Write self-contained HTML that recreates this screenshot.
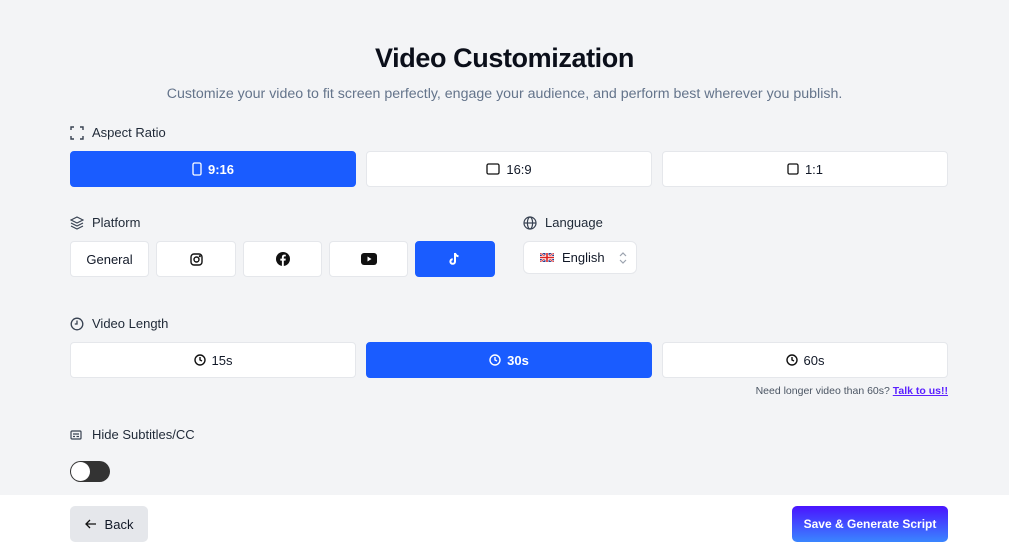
<!DOCTYPE html>
<html><head><style>
*{box-sizing:border-box;margin:0;padding:0}
body{width:1009px;height:549px;background:#f3f4f6;font-family:"Liberation Sans",sans-serif;position:relative;overflow:hidden;color:#111827}
.a{position:absolute}
h1{position:absolute;top:43px;width:100%;text-align:center;font-size:27px;font-weight:bold;color:#0b0f1a;letter-spacing:-0.4px}
.sub{top:86px;width:100%;text-align:center;font-size:14.2px;color:#64748b}
.lbl{font-size:13px;color:#1f2937;display:flex;align-items:center;gap:8px}
.btn{position:absolute;background:#fff;border:1px solid #e5e7eb;border-radius:4px;display:flex;align-items:center;justify-content:center;gap:6px;font-size:13px;color:#111827}
.on{background:#1a5cff;border-color:#1a5cff;color:#fff;font-weight:bold}
svg{display:block}
</style></head><body>
<h1>Video Customization</h1>
<div class="a sub">Customize your video to fit screen perfectly, engage your audience, and perform best wherever you publish.</div>

<div class="a lbl" style="left:70px;top:125px"><svg width="14" height="14" viewBox="0 0 14 14" fill="none" stroke="#374151" stroke-width="1.4"><path d="M1 4V1h3M10 1h3v3M13 10v3h-3M4 13H1v-3"/></svg>Aspect Ratio</div>
<div class="btn on" style="left:70px;top:151px;width:286px;height:36px"><svg width="10" height="14" viewBox="0 0 10 14" fill="none" stroke="#fff" stroke-width="1.3"><rect x="1" y="1" width="8" height="12" rx="1.5"/></svg>9:16</div>
<div class="btn" style="left:366px;top:151px;width:286px;height:36px"><svg width="14" height="12" viewBox="0 0 14 12" fill="none" stroke="#111" stroke-width="1.3"><rect x="1" y="1" width="12" height="10" rx="1.5"/></svg>16:9</div>
<div class="btn" style="left:662px;top:151px;width:286px;height:36px"><svg width="12" height="12" viewBox="0 0 12 12" fill="none" stroke="#111" stroke-width="1.3"><rect x="1" y="1" width="10" height="10" rx="1.5"/></svg>1:1</div>

<div class="a lbl" style="left:70px;top:215px"><svg width="14" height="14" viewBox="0 0 14 14" fill="none" stroke="#374151" stroke-width="1.2"><path d="M7 1L1 4l6 3 6-3zM1 7l6 3 6-3M1 10l6 3 6-3"/></svg>Platform</div>
<div class="btn" style="left:70px;top:241px;width:79px;height:36px">General</div>
<div class="btn" style="left:156px;top:241px;width:80px;height:36px"><svg width="13" height="13" viewBox="0 0 13 13" fill="none" stroke="#111" stroke-width="1.4"><rect x="1" y="1" width="11" height="11" rx="3"/><circle cx="6.5" cy="6.5" r="2.5"/><circle cx="9.8" cy="3.2" r=".4" fill="#111"/></svg></div>
<div class="btn" style="left:243px;top:241px;width:79px;height:36px"><svg width="14" height="14" viewBox="0 0 14 14"><circle cx="7" cy="7" r="7" fill="#111"/><path d="M7.8 14V8.6h1.7l.3-2H7.8V5.4c0-.6.2-1 1-1h1V2.7c-.3 0-.9-.1-1.5-.1-1.5 0-2.4.9-2.4 2.5v1.5H4.3v2h1.6V14z" fill="#fff"/></svg></div>
<div class="btn" style="left:329px;top:241px;width:79px;height:36px"><svg width="16" height="12" viewBox="0 0 16 12"><rect width="16" height="12" rx="3" fill="#111"/><path d="M6.5 3.5v5l4-2.5z" fill="#fff"/></svg></div>
<div class="btn on" style="left:415px;top:241px;width:80px;height:36px"><svg width="12" height="14" viewBox="0 0 12 14" fill="none" stroke="#fff" stroke-width="2"><path d="M6 1v8.5a2.3 2.3 0 1 1-2.3-2.3M6 1c.3 1.8 1.6 3 3.5 3.2"/></svg></div>

<div class="a lbl" style="left:523px;top:215px"><svg width="14" height="14" viewBox="0 0 14 14" fill="none" stroke="#374151" stroke-width="1.2"><circle cx="7" cy="7" r="6"/><ellipse cx="7" cy="7" rx="2.6" ry="6"/><path d="M1 7h12"/></svg>Language</div>
<div class="btn" style="left:523px;top:241px;width:114px;height:33px;border-radius:6px;justify-content:flex-start;padding-left:16px;gap:8px"><svg width="14" height="9" viewBox="0 0 14 9"><rect width="14" height="9" fill="#2a3d8f"/><path d="M0 0l14 9M14 0L0 9" stroke="#fff" stroke-width="2"/><path d="M0 0l14 9M14 0L0 9" stroke="#d22" stroke-width=".8"/><path d="M7 0v9M0 4.5h14" stroke="#fff" stroke-width="3"/><path d="M7 0v9M0 4.5h14" stroke="#d22" stroke-width="1.6"/></svg>English<svg style="margin-left:6px" width="8" height="12" viewBox="0 0 8 12" fill="none" stroke="#9ca3af" stroke-width="1.2"><path d="M1 4l3-3 3 3M1 8l3 3 3-3"/></svg></div>

<div class="a lbl" style="left:70px;top:316px"><svg width="14" height="14" viewBox="0 0 14 14" fill="none" stroke="#374151" stroke-width="1.3"><circle cx="7" cy="7" r="5.8"/><path d="M7 3.5V7H4.8"/></svg>Video Length</div>
<div class="btn" style="left:70px;top:342px;width:286px;height:36px"><svg width="12" height="12" viewBox="0 0 12 12" fill="none" stroke="#111" stroke-width="1.4"><circle cx="6" cy="6" r="5"/><path d="M6 3v3l2 1"/></svg>15s</div>
<div class="btn on" style="left:366px;top:342px;width:286px;height:36px"><svg width="12" height="12" viewBox="0 0 12 12" fill="none" stroke="#fff" stroke-width="1.4"><circle cx="6" cy="6" r="5"/><path d="M6 3v3l2 1"/></svg>30s</div>
<div class="btn" style="left:662px;top:342px;width:286px;height:36px"><svg width="12" height="12" viewBox="0 0 12 12" fill="none" stroke="#111" stroke-width="1.4"><circle cx="6" cy="6" r="5"/><path d="M6 3v3l2 1"/></svg>60s</div>
<div class="a" style="right:61px;top:385px;font-size:10.5px;color:#4b5563">Need longer video than 60s? <span style="color:#5b21ff;text-decoration:underline;font-weight:bold">Talk to us!!</span></div>

<div class="a lbl" style="left:70px;top:427px;gap:10px"><svg width="12" height="12" viewBox="0 0 12 12" fill="none" stroke="#374151" stroke-width="1.2"><rect x="1" y="2" width="10" height="8" rx="1"/><path d="M3 5h6M3 7.5h2M6.5 7.5h2.5"/></svg>Hide Subtitles/CC</div>
<div class="a" style="left:70px;top:461px;width:40px;height:21px;border-radius:11px;background:#333"><div class="a" style="left:1px;top:1px;width:19px;height:19px;border-radius:50%;background:#fff"></div></div>

<div class="a" style="left:0;top:495px;width:1009px;height:54px;background:#fff"></div>
<div class="btn" style="left:70px;top:506px;width:78px;height:36px;background:#e5e7eb;border:none;border-radius:5px;gap:8px"><svg width="12" height="10" viewBox="0 0 12 10" fill="none" stroke="#111" stroke-width="1.3"><path d="M11 5H1.5M5 1L1 5l4 4"/></svg>Back</div>
<div class="btn" style="left:792px;top:506px;width:156px;height:36px;border:none;border-radius:5px;color:#fff;font-weight:bold;font-size:12px;background:linear-gradient(180deg,#4a14ff,#3a86ff)">Save &amp; Generate Script</div>
</body></html>
